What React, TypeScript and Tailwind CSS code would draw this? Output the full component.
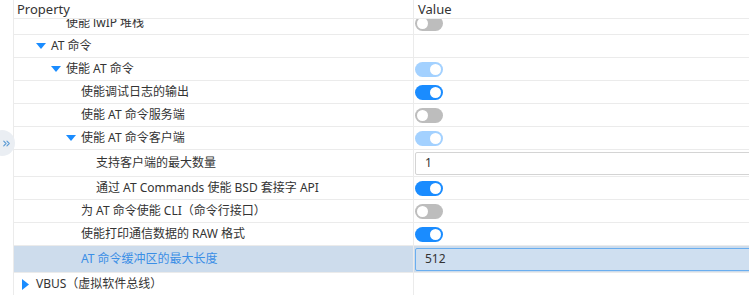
import { ChevronsRight } from "lucide-react";

type Row = {
  label: string;
  depth: number;
  caret?: "down" | "right";
  value?: "on" | "off" | "dim" | string;
  selected?: boolean;
};

const rows: Row[] = [
  { label: "使能 lwIP 堆栈", depth: 3, value: "off" },
  { label: "AT 命令", depth: 2, caret: "down" },
  { label: "使能 AT 命令", depth: 3, caret: "down", value: "dim" },
  { label: "使能调试日志的输出", depth: 4, value: "on" },
  { label: "使能 AT 命令服务端", depth: 4, value: "off" },
  { label: "使能 AT 命令客户端", depth: 4, caret: "down", value: "dim" },
  { label: "支持客户端的最大数量", depth: 5, value: "1" },
  { label: "通过 AT Commands 使能 BSD 套接字 API", depth: 5, value: "on" },
  { label: "为 AT 命令使能 CLI（命令行接口）", depth: 4, value: "off" },
  { label: "使能打印通信数据的 RAW 格式", depth: 4, value: "on" },
  { label: "AT 命令缓冲区的最大长度", depth: 4, value: "512", selected: true },
  { label: "VBUS（虚拟软件总线）", depth: 1, caret: "right" },
];

const Toggle = ({ state }: { state: string }) => {
  const on = state !== "off";
  const bg = state === "on" ? "bg-[#1a8cff]" : state === "dim" ? "bg-[#a3d1ff]" : "bg-[#bdbdbd]";
  return (
    <div className={`w-[28px] h-[15px] rounded-full flex items-center px-[2px] ${bg} ${on ? "justify-end" : "justify-start"}`}>
      <div className="w-[11px] h-[11px] rounded-full bg-white" />
    </div>
  );
};

const Caret = ({ dir }: { dir: "down" | "right" }) =>
  dir === "down" ? (
    <svg width="10" height="6" viewBox="0 0 10 6" className="mr-[5px]">
      <polygon points="0,0 10,0 5,6" fill="#1a8cff" />
    </svg>
  ) : (
    <svg width="7" height="11" viewBox="0 0 7 11" className="mr-[7px]">
      <polygon points="0,0 7,5.5 0,11" fill="#1a8cff" />
    </svg>
  );

const TreeRow = ({ row }: { row: Row }) => {
  const isInput = row.value !== undefined && !["on", "off", "dim"].includes(row.value);
  const textX = 22 + 15 * (row.depth - 1);
  const caretW = row.caret === "down" ? 15 : 14;
  return (
    <div
      className={`flex border-b border-[#ebebeb] ${isInput ? "h-[27px]" : "h-[23px]"} ${
        row.selected ? "bg-[#cddcec]" : ""
      }`}
    >
      <div
        className={`w-[400px] shrink-0 flex items-center border-r border-[#ebebeb] ${
          row.selected ? "text-[#3a8ee6]" : "text-[#333]"
        }`}
        style={{ paddingLeft: row.caret ? textX - caretW : textX }}
      >
        {row.caret && <Caret dir={row.caret} />}
        <span className="whitespace-nowrap">{row.label}</span>
      </div>
      <div className="flex-1 flex items-center pl-[1px] min-w-0">
        {isInput ? (
          <div
            className={`h-[23px] w-[340px] shrink-0 flex items-center pl-[9px] rounded-[2px] border ${
              row.selected ? "border-[#6aaeef] bg-[#cfdff0]" : "border-[#d4d4d4] bg-white"
            } text-[#333] text-[12px]`}
          >
            {row.value}
          </div>
        ) : row.value ? (
          <Toggle state={row.value} />
        ) : null}
      </div>
    </div>
  );
};

export default function App() {
  return (
    <div
      className="relative w-[749px] h-[295px] overflow-hidden bg-white flex text-[12px] leading-none"
      style={{ fontFamily: '"Noto Sans", "Noto Sans CJK SC", sans-serif' }}
    >
      <div className="w-[14px] shrink-0 border-r border-[#ebebeb]" />
      <div className="flex-1 flex flex-col min-w-0 overflow-hidden">
        <div className="h-[19px] shrink-0 flex border-b border-[#ebebeb] text-[13px] text-[#333]">
          <div className="w-[400px] shrink-0 pl-[3px] flex items-center border-r border-[#ebebeb]">Property</div>
          <div className="flex-1 pl-[4px] flex items-center">Value</div>
        </div>
        <div className="flex-1 overflow-hidden">
          <div className="-mt-[7px]">
            {rows.map((r, i) => (
              <TreeRow key={i} row={r} />
            ))}
          </div>
        </div>
      </div>
      <div className="absolute left-[-11px] top-[130px] w-[26px] h-[26px] rounded-full bg-[#eaeef3] flex items-center justify-end pr-[3px]">
        <ChevronsRight size={11} strokeWidth={2.5} className="text-[#5b9bd5]" />
      </div>
    </div>
  );
}
